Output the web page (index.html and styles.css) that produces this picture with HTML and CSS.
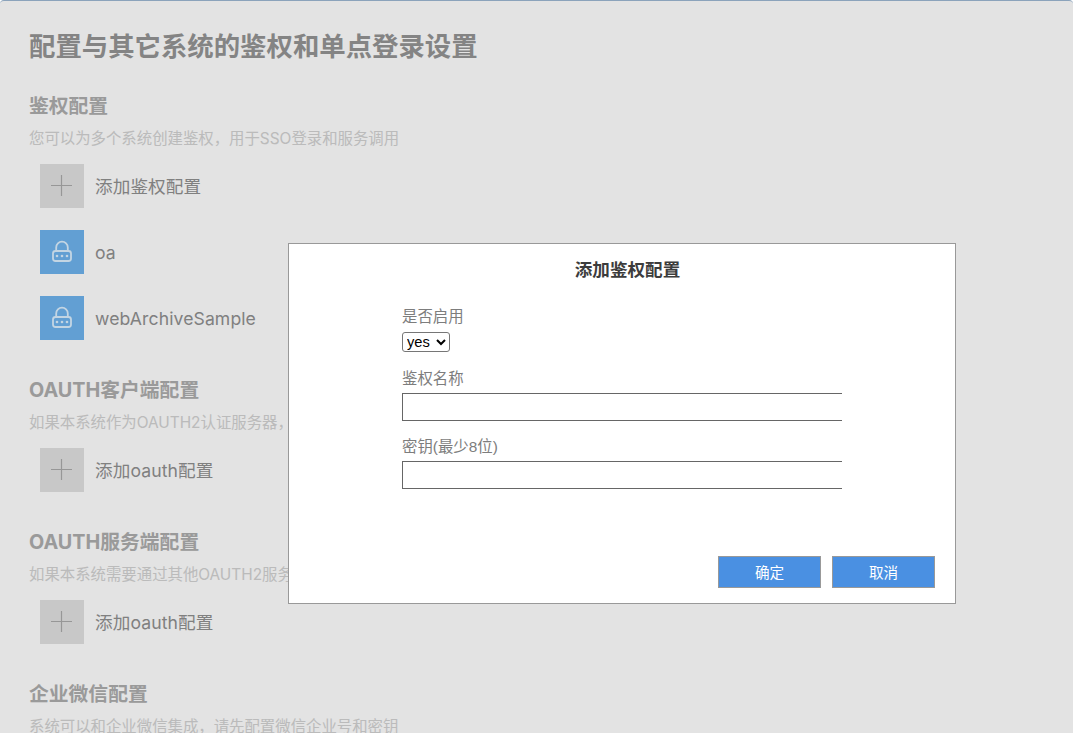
FILE: index.html
```html
<!DOCTYPE html>
<html lang="zh">
<head>
<meta charset="utf-8">
<title>鉴权配置</title>
<link rel="stylesheet" href="styles.css">
</head>
<body>
<main class="page">
  <h1 class="title">配置与其它系统的鉴权和单点登录设置</h1>

  <section class="group">
    <h2 class="group-title">鉴权配置</h2>
    <p class="group-desc">您可以为多个系统创建鉴权，用于SSO登录和服务调用</p>
    <ul class="items">
      <li class="item"><span class="tile tile-add"><svg viewBox="0 0 44 44" class="icon"><path d="M11 21.500h21M21.500 11v21" class="plus"/></svg></span><span class="add-label">添加鉴权配置</span></li>
      <li class="item"><span class="tile tile-lock"><svg viewBox="0 0 44 44" class="icon"><path d="M16.200 21v-3.500a5.800 5.800 0 0 1 11.600 0V21" class="lock"/><rect x="13" y="21" width="18" height="10" rx="2.500" class="lock"/><circle cx="17" cy="26" r="1.300" class="dot"/><circle cx="22" cy="26" r="1.300" class="dot"/><circle cx="27" cy="26" r="1.300" class="dot"/></svg></span><span>oa</span></li>
      <li class="item"><span class="tile tile-lock"><svg viewBox="0 0 44 44" class="icon"><path d="M16.200 21v-3.500a5.800 5.800 0 0 1 11.600 0V21" class="lock"/><rect x="13" y="21" width="18" height="10" rx="2.500" class="lock"/><circle cx="17" cy="26" r="1.300" class="dot"/><circle cx="22" cy="26" r="1.300" class="dot"/><circle cx="27" cy="26" r="1.300" class="dot"/></svg></span><span>webArchiveSample</span></li>
    </ul>
  </section>

  <section class="group">
    <h2 class="group-title">OAUTH客户端配置</h2>
    <p class="group-desc">如果本系统作为OAUTH2认证服务器，可以为其它系统创建OAUTH客户端配置</p>
    <ul class="items">
      <li class="item"><span class="tile tile-add"><svg viewBox="0 0 44 44" class="icon"><path d="M11 21.500h21M21.500 11v21" class="plus"/></svg></span><span class="add-label">添加oauth配置</span></li>
    </ul>
  </section>

  <section class="group">
    <h2 class="group-title">OAUTH服务端配置</h2>
    <p class="group-desc">如果本系统需要通过其他OAUTH2服务器登录，可以在这里进行配置</p>
    <ul class="items">
      <li class="item"><span class="tile tile-add"><svg viewBox="0 0 44 44" class="icon"><path d="M11 21.500h21M21.500 11v21" class="plus"/></svg></span><span class="add-label">添加oauth配置</span></li>
    </ul>
  </section>

  <section class="group">
    <h2 class="group-title">企业微信配置</h2>
    <p class="group-desc">系统可以和企业微信集成，请先配置微信企业号和密钥</p>
  </section>
</main>

<div class="overlay"></div>

<form class="dialog">
  <h3 class="dialog-title">添加鉴权配置</h3>
  <div class="fields">
    <label class="field-label" for="enabled">是否启用</label>
    <select class="field-select" id="enabled"><option>yes</option><option>no</option></select>
    <label class="field-label" for="name">鉴权名称</label>
    <input class="field-input" id="name" type="text">
    <label class="field-label" for="key">密钥(最少8位)</label>
    <input class="field-input" id="key" type="password">
  </div>
  <div class="actions">
    <button class="btn" type="button">确定</button>
    <button class="btn" type="button">取消</button>
  </div>
</form>
</body>
</html>
```

FILE: styles.css
```css
* { box-sizing: border-box; }

html, body {
  margin: 0;
  height: 100%;
  overflow: hidden;
}

body {
  background: #fff;
  color: #333;
  font-family: "Noto Sans CJK SC", "Liberation Sans", sans-serif;
}

.page {
  padding: 30px 29px 0;
  height: 733px;
  overflow: hidden;
}

.title {
  margin: 0 0 29px;
  font-family: "Liberation Sans", "Noto Sans CJK SC", sans-serif;
  font-size: 26.4px;
  line-height: 34px;
  font-weight: 700;
  color: #959595;
}

.group { margin-bottom: 37px; }

.group-title {
  margin: 0;
  font-family: "Inter", "Noto Sans CJK SC", sans-serif;
  font-size: 19.8px;
  line-height: 26px;
  font-weight: 700;
  color: #adadad;
}

.group-desc {
  margin: 10px 0 15px;
  font-family: "Inter", "Noto Sans CJK SC", sans-serif;
  font-size: 15.4px;
  line-height: 20px;
  color: #d2d2d2;
  white-space: nowrap;
}

.items {
  list-style: none;
  margin: 0;
  padding: 0 0 0 11px;
  display: flex;
  flex-direction: column;
  gap: 22px;
}

.item {
  display: flex;
  align-items: center;
  gap: 11px;
  height: 44px;
  font-family: "Inter", "Noto Sans CJK SC", sans-serif;
  font-size: 17.6px;
  letter-spacing: 0.1px;
  color: #909090;
}

.add-label { margin-bottom: 2px; }

.tile {
  width: 44px;
  height: 44px;
  flex: none;
  display: block;
}

.tile-add { background: #e1e1e1; }
.tile-lock { background: #6fb3ee; }

.icon {
  display: block;
  width: 44px;
  height: 44px;
}

.plus {
  fill: none;
  stroke: #aaa;
  stroke-width: 1.2;
}

.lock {
  fill: none;
  stroke: #dcf0ff;
  stroke-width: 1.800;
}

.dot { fill: #dcf0ff; }

.overlay {
  position: fixed;
  inset: 0;
  background: rgba(0, 0, 0, 0.11);
  border-top: 1px solid #8ba3bb;
  border-radius: 4px 4px 0 0;
}

.dialog {
  position: fixed;
  left: 288px;
  top: 243px;
  width: 668px;
  height: 361px;
  display: flex;
  flex-direction: column;
  background: #fff;
  border: 1px solid #999;
  color: #333;
}

.dialog-title {
  margin: 0;
  padding: 15px 0 0 11px;
  text-align: center;
  font-size: 17.6px;
  line-height: 22px;
  font-weight: 700;
  font-family: "Liberation Sans", "Noto Sans CJK SC", sans-serif;
  color: #3c3c3c;
}

.fields {
  flex: 1;
  padding: 26px 0 0 113px;
  display: flex;
  flex-direction: column;
  align-items: flex-start;
}

.field-label {
  font-size: 15.4px;
  line-height: 20px;
  color: #7d7d7d;
  font-family: "Liberation Sans", "Noto Sans CJK SC", sans-serif;
  margin-bottom: 4px;
}

.field-select {
  width: 48px;
  height: 20px;
  margin-top: 1px;
  margin-bottom: 17px;
  padding: 0;
  font-family: "Liberation Sans", sans-serif;
  font-size: 14.7px;
  color: #000;
  background: #fff;
  border: 1px solid #767676;
  border-radius: 3px;
}

.field-input {
  width: 440px;
  height: 28px;
  margin-bottom: 16px;
  border: 1px solid #666;
  border-right: 0;
  outline: 0;
  background: #fff;
  padding: 0;
}

.actions {
  display: flex;
  justify-content: flex-end;
  gap: 11px;
  padding: 0 20px 15px 0;
}

.btn {
  width: 103px;
  height: 32px;
  padding: 0 0 2px;
  background: #4a90e2;
  border: 1px solid #999;
  color: #fff;
  font-size: 14.6px;
  font-family: "Liberation Sans", "Noto Sans CJK SC", sans-serif;
}
```
